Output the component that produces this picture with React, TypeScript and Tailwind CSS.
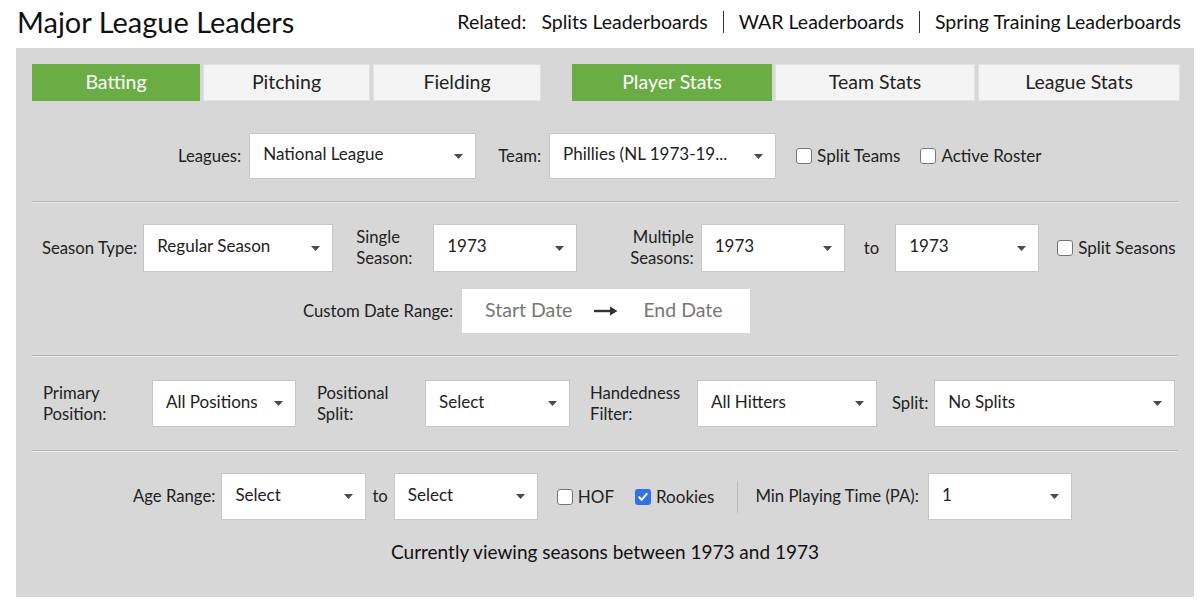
import React from "react";

const Caret = () => (
  <svg width="9" height="5" viewBox="0 0 9 5" className="shrink-0">
    <path d="M0 0h9L4.5 5z" fill="#4a4a4a" />
  </svg>
);

const Select = ({ value, w, h = "h-[47px]" }: { value: string; w: string; h?: string }) => (
  <div className={`${w} ${h} shrink-0 bg-white border border-[#c6c6c6] flex items-center justify-between pl-[13px] pr-[12px] text-[17px] text-[#222]`}>
    <span className="-mt-[4px] truncate">{value}</span>
    <Caret />
  </div>
);

const Check = ({ checked = false }: { checked?: boolean }) =>
  checked ? (
    <span className="w-[16px] h-[16px] rounded-[3px] bg-[#2f72e6] flex items-center justify-center shrink-0">
      <svg width="12" height="12" viewBox="0 0 12 12">
        <path d="M2.2 6.3l2.5 2.6 5-6" stroke="white" strokeWidth="2" fill="none" strokeLinecap="round" strokeLinejoin="round" />
      </svg>
    </span>
  ) : (
    <span className="w-[16px] h-[16px] rounded-[3px] bg-white border border-[#767676] shrink-0" />
  );

const CheckLabel = ({ label, checked }: { label: string; checked?: boolean }) => (
  <label className="flex items-center gap-[5px] text-[17px] text-[#222] whitespace-nowrap">
    <Check checked={checked} />
    <span>{label}</span>
  </label>
);

const Label = ({ children, className = "" }: { children: React.ReactNode; className?: string }) => (
  <span className={`text-[16.7px] leading-[21px] text-[#222] shrink-0 whitespace-nowrap ${className}`}>{children}</span>
);

const Divider = () => <div className="border-t border-[#b4b4b4] border-b border-b-[#ececec]" />;

const Tab = ({ label, active, w }: { label: string; active?: boolean; w: string }) => (
  <div
    className={`${w} h-[37px] flex items-center justify-center text-[19.5px] ${
      active ? "bg-[#6aad44] text-white" : "bg-[#f4f4f4] text-[#222] border border-[#e2e2e2]"
    }`}
  >
    <span className="-mt-[2px]">{label}</span>
  </div>
);

export default function App() {
  return (
    <div className="w-[1200px] h-[605px] bg-white font-['Lato',sans-serif] overflow-hidden">
      {/* Header */}
      <div className="flex items-center justify-between pl-[17px] pr-[19px] h-[48px]">
        <h1 className="text-[29px] text-[#111] -mt-[4px]">Major League Leaders</h1>
        <div className="flex items-center text-[19.5px] text-[#111] -mt-[4px]">
          <span className="mr-[15px]">Related:</span>
          <a>Splits Leaderboards</a>
          <span className="mx-[15px] w-px h-[22px] bg-[#333]" />
          <a>WAR Leaderboards</a>
          <span className="mx-[15px] w-px h-[22px] bg-[#333]" />
          <a>Spring Training Leaderboards</a>
        </div>
      </div>

      {/* Panel */}
      <div className="mx-[16px] w-[1178px] h-[549px] bg-[#d7d7d7] px-[16px] pt-[16px]">
        {/* Tabs */}
        <div className="flex">
          <div className="flex gap-[3px]">
            <Tab label="Batting" active w="w-[168px]" />
            <Tab label="Pitching" w="w-[167px]" />
            <Tab label="Fielding" w="w-[168px]" />
          </div>
          <div className="flex gap-[3px] ml-[31px]">
            <Tab label="Player Stats" active w="w-[200px]" />
            <Tab label="Team Stats" w="w-[200px]" />
            <Tab label="League Stats" w="w-[202px]" />
          </div>
        </div>

        {/* Row 1 */}
        <div className="flex items-center h-[100px] pt-[10px] pl-[146px]">
          <Label className="mr-[8px]">Leagues:</Label>
          <Select value="National League" w="w-[227px]" h="h-[46px]" />
          <Label className="ml-[22px] mr-[8px]">Team:</Label>
          <Select value="Phillies (NL 1973-19..." w="w-[227px]" h="h-[46px]" />
          <div className="ml-[20px]"><CheckLabel label="Split Teams" /></div>
          <div className="ml-[20px]"><CheckLabel label="Active Roster" /></div>
        </div>

        <Divider />

        {/* Row 2 */}
        <div className="flex items-center h-[48px] mt-[21px] pl-[10px]">
          <Label className="mr-[6px]">Season Type:</Label>
          <Select value="Regular Season" w="w-[190px]" h="h-[48px]" />
          <Label className="ml-[23px] w-[77px]">Single<br />Season:</Label>
          <Select value="1973" w="w-[144px]" h="h-[48px]" />
          <Label className="ml-[53px] mr-[7px] text-right">Multiple<br />Seasons:</Label>
          <Select value="1973" w="w-[144px]" h="h-[48px]" />
          <Label className="ml-[19px] mr-[16px]">to</Label>
          <Select value="1973" w="w-[144px]" h="h-[48px]" />
          <div className="ml-[18px]"><CheckLabel label="Split Seasons" /></div>
        </div>

        {/* Custom date range */}
        <div className="flex items-center pl-[271px] mt-[17px]">
          <Label className="mr-[9px]">Custom Date Range:</Label>
          <div className="w-[288px] h-[44px] bg-white flex items-center text-[19.5px] text-[#777] pl-[23px]">
            <span className="-mt-[3px]">Start Date</span>
            <svg width="24" height="10" viewBox="0 0 24 10" className="ml-[22px] mr-[25px]">
              <path d="M0 5h19" stroke="#333" strokeWidth="2.4" />
              <path d="M16 0.5L23.5 5L16 9.5z" fill="#333" />
            </svg>
            <span className="-mt-[3px]">End Date</span>
          </div>
        </div>

        <div className="h-[22px]" />
        <Divider />

        {/* Row 3 */}
        <div className="flex items-center h-[47px] my-[23px] pl-[11px]">
          <Label className="w-[109px]">Primary<br />Position:</Label>
          <Select value="All Positions" w="w-[144px]" />
          <Label className="ml-[21px] w-[108px]">Positional<br />Split:</Label>
          <Select value="Select" w="w-[145px]" />
          <Label className="ml-[20px] w-[107px]">Handedness<br />Filter:</Label>
          <Select value="All Hitters" w="w-[180px]" />
          <Label className="ml-[15px] mr-[6px]">Split:</Label>
          <Select value="No Splits" w="w-[241px]" />
        </div>

        <Divider />

        {/* Row 4 */}
        <div className="flex items-center h-[47px] mt-[21px] pl-[101px]">
          <Label className="mr-[6px]">Age Range:</Label>
          <Select value="Select" w="w-[145px]" />
          <Label className="mx-[6px]">to</Label>
          <Select value="Select" w="w-[144px]" />
          <div className="ml-[19px]"><CheckLabel label="HOF" /></div>
          <div className="ml-[21px]"><CheckLabel label="Rookies" checked /></div>
          <span className="ml-[23px] w-px h-[32px] bg-[#bdbdbd]" />
          <Label className="ml-[17px] mr-[9px]">Min Playing Time (PA):</Label>
          <Select value="1" w="w-[144px]" />
        </div>

        <div className="text-center text-[19px] leading-[24px] text-[#111] mt-[20px]">
          Currently viewing seasons between 1973 and 1973
        </div>
      </div>
    </div>
  );
}
